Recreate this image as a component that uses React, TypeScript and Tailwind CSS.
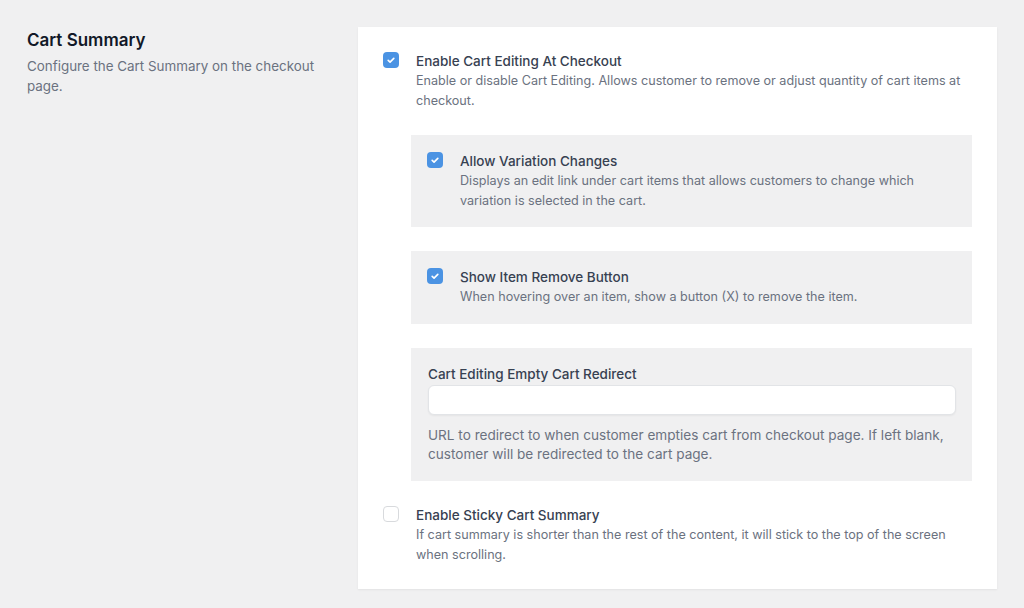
import React from "react";

function Check({ checked }: { checked: boolean }) {
  return checked ? (
    <span className="mt-[1px] flex h-[16px] w-[16px] shrink-0 items-center justify-center rounded-[4px] bg-[#4b93e3]">
      <svg viewBox="0 0 16 16" className="h-[10px] w-[10px]" fill="none" stroke="white" strokeWidth="2.6" strokeLinecap="round" strokeLinejoin="round">
        <path d="M3.5 8.5l3 2.8 6-6" />
      </svg>
    </span>
  ) : (
    <span className="mt-[1px] block h-[16px] w-[16px] shrink-0 rounded-[4px] border border-[#d8dadd] bg-white" />
  );
}

function Option({
  checked,
  title,
  desc,
}: {
  checked: boolean;
  title: string;
  desc: React.ReactNode;
}) {
  return (
    <div className="flex gap-[17px]">
      <Check checked={checked} />
      <div>
        <div className="h-[20px] text-[13.5px] font-medium leading-[20px] text-[#374151]">{title}</div>
        <div className="text-[12.6px] leading-[20px] text-[#6b7280]">{desc}</div>
      </div>
    </div>
  );
}

export default function App() {
  return (
    <div
      className="min-h-[608px] bg-[#f0f0f1]"
      style={{ fontFamily: "Inter, 'Noto Sans', sans-serif" }}
    >
      <div className="flex pt-[27px] pl-[27px] pr-[27px]">
        <div className="w-[331px] shrink-0 pt-[1px]">
          <h2 className="text-[17px] font-semibold leading-[24px] text-[#111827]">Cart Summary</h2>
          <p className="mt-[4px] w-[300px] text-[13.4px] leading-[20px] text-[#6b7280]">
            Configure the Cart Summary on the checkout page.
          </p>
        </div>
        <div className="w-[639px] bg-white pt-[24px] pb-[24px] pl-[25px] pr-[25px] shadow-[0_1px_2px_rgba(0,0,0,0.06)]">
          <Option
            checked
            title="Enable Cart Editing At Checkout"
            desc="Enable or disable Cart Editing. Allows customer to remove or adjust quantity of cart items at checkout."
          />
          <div className="ml-[28px] mt-[24px] flex flex-col gap-[24px]">
            <div className="bg-[#f0f0f1] pl-[16px] pr-[40px] pt-[16px] pb-[16px]">
              <Option
                checked
                title="Allow Variation Changes"
                desc="Displays an edit link under cart items that allows customers to change which variation is selected in the cart."
              />
            </div>
            <div className="bg-[#f0f0f1] pl-[16px] pr-[17px] pt-[16px] pb-[17px]">
              <Option
                checked
                title="Show Item Remove Button"
                desc="When hovering over an item, show a button (X) to remove the item."
              />
            </div>
            <div className="bg-[#f0f0f1] pl-[17px] pr-[16px] pt-[16px] pb-[17px]">
              <div className="h-[20px] text-[13.5px] font-medium leading-[20px] text-[#374151]">
                Cart Editing Empty Cart Redirect
              </div>
              <input
                type="text"
                className="mt-[1px] block h-[30px] w-full rounded-[6px] border border-[#e2e4e7] bg-white px-2 text-[13px] shadow-[0_1px_2px_rgba(0,0,0,0.05)] outline-none"
              />
              <div className="mt-[11px] text-[13.6px] leading-[19px] text-[#6b7280]">
                URL to redirect to when customer empties cart from checkout page. If left blank, customer will be redirected to the cart page.
              </div>
            </div>
          </div>
          <div className="mt-[24px]">
            <Option
              checked={false}
              title="Enable Sticky Cart Summary"
              desc="If cart summary is shorter than the rest of the content, it will stick to the top of the screen when scrolling."
            />
          </div>
        </div>
      </div>
    </div>
  );
}
